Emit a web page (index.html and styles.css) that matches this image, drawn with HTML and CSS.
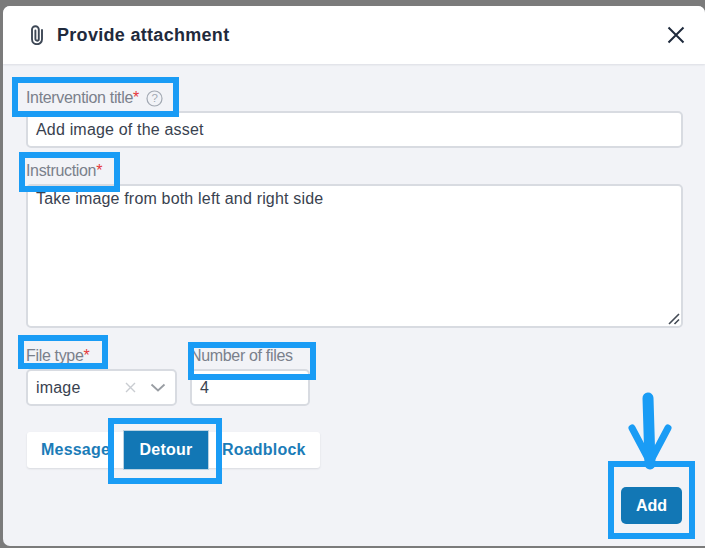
FILE: index.html
```html
<!DOCTYPE html>
<html lang="en">
<head>
<meta charset="utf-8">
<title>Provide attachment</title>
<link rel="stylesheet" href="styles.css">
</head>
<body>
<div class="modal">
  <header class="head">
    <svg class="clip" width="16" height="20" viewBox="0 0 16 20"><path d="M13 5v9.2a5 5 0 0 1-10 0V4.6a3.4 3.4 0 0 1 6.8 0v9.4a1.7 1.7 0 0 1-3.4 0V5.5" fill="none" stroke="#3d4755" stroke-width="1.9" stroke-linecap="round"/></svg>
    <h1 class="title">Provide attachment</h1>
    <svg class="close" width="18" height="18" viewBox="0 0 18 18"><path d="M1.5 1.5l15 15M16.5 1.5l-15 15" stroke="#1f2a3c" stroke-width="2" fill="none"/></svg>
  </header>
  <div class="body">
    <div class="label-row row-title"><span class="label">Intervention title<i>*</i></span>
      <svg class="help" width="17" height="17" viewBox="0 0 17 17"><circle cx="8.5" cy="8.5" r="7.5" fill="none" stroke="#a3a9b3" stroke-width="1.2"/><text x="8.5" y="12.4" text-anchor="middle" class="help-q">?</text></svg>
    </div>
    <div class="field input-title">Add image of the asset</div>
    <div class="label-row row-instr"><span class="label">Instruction<i>*</i></span></div>
    <div class="field area">Take image from both left and right side
      <svg class="grip" width="12" height="12" viewBox="0 0 12 12"><path d="M1 11L11 1M6.5 11L11 6.5" stroke="#444b55" stroke-width="1.6" fill="none"/></svg>
    </div>
    <div class="pair">
      <div class="col-type">
        <div class="label-row row-small"><span class="label">File type<i>*</i></span></div>
        <div class="field select"><span class="sel-val">image</span>
          <svg class="sel-x" width="11" height="11" viewBox="0 0 11 11"><path d="M1 1l9 9M10 1l-9 9" stroke="#c9ccd1" stroke-width="1.4" fill="none"/></svg>
          <svg class="sel-c" width="16" height="9" viewBox="0 0 16 9"><path d="M1.5 1.5L8 7.5l6.5-6" stroke="#999da3" stroke-width="1.8" fill="none"/></svg>
        </div>
      </div>
      <div class="col-num">
        <div class="label-row row-small"><span class="label">Number of files</span></div>
        <div class="field num">4</div>
      </div>
    </div>
    <div class="tabs">
      <span class="tab tab-msg">Message</span>
      <span class="tab tab-on">Detour</span>
      <span class="tab tab-road">Roadblock</span>
    </div>
    <div class="foot"><button class="add">Add</button></div>
  </div>
</div>
<div class="mark m1"></div>
<div class="mark m2"></div>
<div class="mark m3"></div>
<div class="mark m4"></div>
<div class="mark m5"></div>
<div class="mark m6"></div>
<svg class="arrow" width="46" height="84" viewBox="0 0 46 84"><path d="M21 8L23 74" stroke="#1a9cf5" stroke-width="11" stroke-linecap="round" fill="none"/><path d="M5 38L23 72L41 38" stroke="#1a9cf5" stroke-width="7" stroke-linecap="round" stroke-linejoin="round" fill="none"/></svg>
</body>
</html>
```
FILE: styles.css
```css
* { box-sizing: border-box; }
html, body { margin: 0; height: 100%; }
body {
  background: #7b7b7b;
  padding: 6px 0 2px 3px;
  font-family: "Liberation Sans", Arial, sans-serif;
  overflow: hidden;
  position: relative;
}
.modal {
  height: 540px;
  background: #f2f3f7;
  border-radius: 7px 7px 0 7px;
  overflow: hidden;
  display: flex;
  flex-direction: column;
}
.head {
  height: 58px;
  background: #fff;
  display: flex;
  align-items: center;
  padding: 0 20px 0 26px;
  box-shadow: 0 1px 2px rgba(30, 40, 60, .1);
  flex: none;
}
.clip { margin-right: 12px; }
.title {
  margin: 0;
  font-size: 18px;
  font-weight: 700;
  letter-spacing: .3px;
  color: #1f2a3c;
  flex: 1;
}
.body {
  flex: 1;
  padding: 0 22px 0 23px;
  display: flex;
  flex-direction: column;
}
.label-row {
  display: flex;
  align-items: center;
  gap: 7px;
  font-size: 16px;
  letter-spacing: -.33px;
  color: #7a808b;
}
.label i { color: #e5383b; font-style: normal; }
.row-title { height: 47px; padding-top: 21px; }
.row-instr { height: 36px; padding-top: 10px; }
.row-small { height: 29px; padding-top: 2px; }
.help-q { font-family: "Liberation Sans", sans-serif; font-size: 11.5px; fill: #a3a9b3; }
.field {
  background: #fff;
  border: 2px solid #d8dbe1;
  border-radius: 5px;
  font-size: 16px;
  letter-spacing: .18px;
  color: #39424f;
  display: flex;
  align-items: center;
  padding: 0 8px;
}
.input-title { height: 37px; }
.area {
  height: 144px;
  align-items: flex-start;
  padding-top: 4px;
  position: relative;
}
.grip { position: absolute; right: 1px; bottom: 1px; }
.pair { display: flex; gap: 13px; margin-top: 12px; }
.col-type { width: 151px; }
.col-num { width: 120px; }
.select, .num { height: 37px; }
.select { padding-right: 9px; }
.sel-val { flex: 1; }
.sel-x { margin-right: 14px; }
.tabs {
  margin-top: 26px;
  margin-left: 1px;
  width: 293px;
  height: 36px;
  background: #fff;
  border-radius: 3px;
  box-shadow: 0 1px 2px rgba(30, 40, 60, .12);
  display: flex;
  align-items: center;
  font-size: 16px;
  letter-spacing: .2px;
  font-weight: 700;
  color: #1b7cb8;
}
.tab { display: flex; align-items: center; justify-content: center; }
.tab-msg { width: 97px; justify-content: flex-start; padding-left: 14px; }
.tab-on {
  width: 84px;
  height: 38px;
  background: #1277b5;
  color: #fff;
  box-shadow: 0 0 0 1px #b9d2e2;
}
.tab-road { flex: 1; justify-content: flex-start; padding-left: 14px; }
.foot {
  display: flex;
  justify-content: flex-end;
  margin-top: 19px;
  margin-right: 1px;
}
.add {
  width: 61px;
  height: 37px;
  border: 0;
  border-radius: 5px;
  background: #1277b5;
  color: #fff;
  font: 700 16px "Liberation Sans", Arial, sans-serif;
}
.mark {
  position: absolute;
  border: 6px solid #1a9cf5;
  pointer-events: none;
}
.m1 { left: 12px; top: 77px; width: 167px; height: 40px; }
.m2 { left: 19px; top: 152px; width: 101px; height: 40px; }
.m3 { left: 18px; top: 335px; width: 90px; height: 34px; }
.m4 { left: 188px; top: 342px; width: 128px; height: 38px; }
.m5 { left: 108px; top: 418px; width: 114px; height: 66px; }
.m6 { left: 608px; top: 461px; width: 87px; height: 78px; }
.arrow { position: absolute; left: 627px; top: 390px; }
```
